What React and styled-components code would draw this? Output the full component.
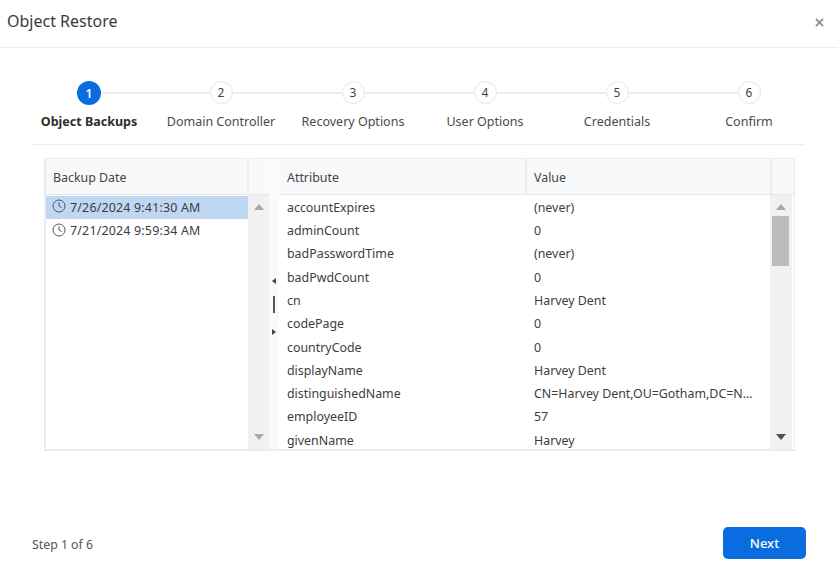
import React from 'react';
import styled, { createGlobalStyle } from 'styled-components';

const GlobalStyle = createGlobalStyle`
  html, body {
    margin: 0;
    padding: 0;
    background: #fff;
    font-family: "Noto Sans", "Open Sans", sans-serif;
    color: #333;
  }
`;

const Modal = styled.div`
  width: 838px;
  height: 577px;
  display: flex;
  flex-direction: column;
  overflow: hidden;
  background: #fff;
`;

const Header = styled.div`
  height: 48px;
  flex: none;
  display: flex;
  align-items: center;
  justify-content: space-between;
  padding: 0 14px 6px 7px;
  box-sizing: border-box;
  border-bottom: 1px solid #eeeeee;
`;

const Title = styled.div`
  font-size: 16px;
  color: #3a3a3a;
`;

const CloseIcon = styled.svg`
  width: 9px;
  height: 9px;
  margin-top: 3px;
`;

const Stepper = styled.div`
  display: flex;
  margin: 33px 33px 0 23px;
  flex: none;
`;

const Step = styled.div`
  width: 132px;
  flex: none;
  display: flex;
  flex-direction: column;
  align-items: center;
  position: relative;

  &:not(:last-child)::after {
    content: '';
    position: absolute;
    left: 66px;
    width: 132px;
    top: 11px;
    height: 2px;
    background: #eeeeee;
  }
`;

const Bubble = styled.div`
  width: ${p => (p.$active ? 24 : 23)}px;
  height: ${p => (p.$active ? 24 : 23)}px;
  box-sizing: border-box;
  border-radius: 50%;
  position: relative;
  z-index: 1;
  display: flex;
  align-items: center;
  justify-content: center;
  font-size: 12px;
  font-weight: ${p => (p.$active ? 600 : 400)};
  background: ${p => (p.$active ? '#0a6ddf' : '#fff')};
  color: ${p => (p.$active ? '#fff' : '#444')};
  border: ${p => (p.$active ? 'none' : '1px solid #e6e6e6')};
  margin-bottom: ${p => (p.$active ? 8 : 9)}px;
`;

const StepLabel = styled.div`
  font-size: 12.5px;
  line-height: 17px;
  white-space: nowrap;
  color: ${p => (p.$active ? '#2e2e2e' : '#4a4a4a')};
  font-weight: ${p => (p.$active ? 700 : 400)};
`;

const Rule = styled.div`
  height: 1px;
  flex: none;
  background: #eeeeee;
  margin: 14px 33px 0 32px;
`;

const Frame = styled.div`
  flex: none;
  display: flex;
  width: 751px;
  height: 293px;
  box-sizing: border-box;
  margin: 13px 0 0 44px;
  border: 2px solid #ececec;
  border-right-width: 1px;
  border-top-width: 1px;
`;

const Pane = styled.div`
  width: ${p => p.$width}px;
  flex: none;
  display: grid;
  grid-template-rows: 36px 1fr;
  grid-template-columns: 1fr ${p => p.$bar}px;
  min-height: 0;
`;

const HeadRow = styled.div`
  grid-column: 1 / -1;
  display: flex;
  background: #f8f9fb;
  border-bottom: 1px solid #e6e6e6;
`;

const HeadCell = styled.div`
  width: ${p => (p.$width ? `${p.$width}px` : 'auto')};
  flex: ${p => (p.$width ? 'none' : '1')};
  box-sizing: border-box;
  display: flex;
  align-items: center;
  padding: 1px 0 0 ${p => p.$pad || 8}px;
  font-size: 12.4px;
  color: #454545;
  border-right: 2px solid #ececec;

  &:last-child {
    border-right: none;
  }
`;

const Body = styled.div`
  overflow: hidden;
  min-height: 0;
  padding-top: 0.6px;
`;

const Row = styled.div`
  height: 23.3px;
  display: flex;
  align-items: center;
  font-size: 12.4px;
  color: #3d3d3d;
  white-space: nowrap;
  background: ${p => (p.$selected ? '#bfd7f3' : 'transparent')};
`;

const DateRow = styled(Row)`
  padding-left: 6px;
  gap: 4px;
  letter-spacing: 0.2px;
`;

const ClockIcon = styled.svg`
  width: 14px;
  height: 14px;
  flex: none;
  margin-top: -2px;
`;

const NameCell = styled.div`
  width: 247px;
  flex: none;
  padding-left: 8px;
  box-sizing: border-box;
`;

const ValueCell = styled.div`
  flex: 1;
  padding-left: 8px;
  box-sizing: border-box;
`;

const Scrollbar = styled.div`
  background: #f1f1f1;
  display: flex;
  flex-direction: column;
  align-items: center;
  justify-content: space-between;
  padding: 9px 0;
  margin-right: ${p => p.$gap || 0}px;
  box-sizing: border-box;
  position: relative;
`;

const Thumb = styled.div`
  position: absolute;
  top: 21px;
  left: 2px;
  right: 3px;
  height: 50px;
  background: #bcbcbc;
`;

const Arrow = styled.div`
  width: 0;
  height: 0;
  border-left: 5px solid transparent;
  border-right: 5px solid transparent;
  ${p => (p.$down ? 'border-top' : 'border-bottom')}: 6px solid ${p => (p.$dark ? '#505050' : '#a8a8a8')};
`;

const Splitter = styled.div`
  width: 10px;
  flex: none;
  display: flex;
  flex-direction: column;
  align-items: center;
  justify-content: center;
  gap: 12px;
  padding-top: 5px;
  background: #fafafa;
  box-sizing: border-box;
`;

const SideArrow = styled.div`
  width: 0;
  height: 0;
  border-top: 3px solid transparent;
  border-bottom: 3px solid transparent;
  margin-top: ${p => (p.$right ? 4 : 0)}px;
  ${p => (p.$right ? 'border-left' : 'border-right')}: 4px solid #444;
`;

const Grip = styled.div`
  width: 2px;
  height: 17px;
  background: #555;
`;

const Footer = styled.div`
  flex: 1;
  display: flex;
  align-items: flex-end;
  justify-content: space-between;
  padding: 0 32px 18px 32px;
  box-sizing: border-box;
`;

const StepCount = styled.div`
  font-size: 12.3px;
  color: #555;
  margin-bottom: 6px;
`;

const NextButton = styled.button`
  width: 83px;
  height: 32px;
  border: none;
  border-radius: 5px;
  background: #0a6ddf;
  color: #fff;
  font-family: inherit;
  font-size: 13px;
  font-weight: 500;
`;

const steps = ['Object Backups', 'Domain Controller', 'Recovery Options', 'User Options', 'Credentials', 'Confirm'];

const backups = ['7/26/2024 9:41:30 AM', '7/21/2024 9:59:34 AM'];

const attributes = [
  ['accountExpires', '(never)'],
  ['adminCount', '0'],
  ['badPasswordTime', '(never)'],
  ['badPwdCount', '0'],
  ['cn', 'Harvey Dent'],
  ['codePage', '0'],
  ['countryCode', '0'],
  ['displayName', 'Harvey Dent'],
  ['distinguishedName', 'CN=Harvey Dent,OU=Gotham,DC=N...'],
  ['employeeID', '57'],
  ['givenName', 'Harvey'],
];

const Clock = () => (
  <ClockIcon viewBox="0 0 14 14" fill="none" stroke="#555" strokeWidth="1">
    <circle cx="7" cy="7" r="6" />
    <path d="M7 3.2V7l2.6 1.6" />
  </ClockIcon>
);

const App = () => (
  <Modal>
    <GlobalStyle />
    <Header>
      <Title>Object Restore</Title>
      <CloseIcon viewBox="0 0 10 10" stroke="#8a8a8a" strokeWidth="1.8">
        <path d="M1 1l8 8M9 1L1 9" />
      </CloseIcon>
    </Header>
    <Stepper>
      {steps.map((label, i) => (
        <Step key={label}>
          <Bubble $active={i === 0}>{i + 1}</Bubble>
          <StepLabel $active={i === 0}>{label}</StepLabel>
        </Step>
      ))}
    </Stepper>
    <Rule />
    <Frame>
      <Pane $width={223} $bar={21}>
        <HeadRow>
          <HeadCell $width={203} $pad={7}>Backup Date</HeadCell>
          <HeadCell />
        </HeadRow>
        <Body>
          {backups.map((date, i) => (
            <DateRow key={date} $selected={i === 0}>
              <Clock />
              {date}
            </DateRow>
          ))}
        </Body>
        <Scrollbar>
          <Arrow />
          <Arrow $down />
        </Scrollbar>
      </Pane>
      <Splitter>
        <SideArrow />
        <Grip />
        <SideArrow $right />
      </Splitter>
      <Pane $width={515} $bar={24}>
        <HeadRow>
          <HeadCell $width={248}>Attribute</HeadCell>
          <HeadCell $width={245} $pad={7}>Value</HeadCell>
          <HeadCell />
        </HeadRow>
        <Body>
          {attributes.map(([name, value]) => (
            <Row key={name}>
              <NameCell>{name}</NameCell>
              <ValueCell>{value}</ValueCell>
            </Row>
          ))}
        </Body>
        <Scrollbar $gap={2}>
          <Arrow />
          <Thumb />
          <Arrow $down $dark />
        </Scrollbar>
      </Pane>
    </Frame>
    <Footer>
      <StepCount>Step 1 of 6</StepCount>
      <NextButton>Next</NextButton>
    </Footer>
  </Modal>
);

export default App;
